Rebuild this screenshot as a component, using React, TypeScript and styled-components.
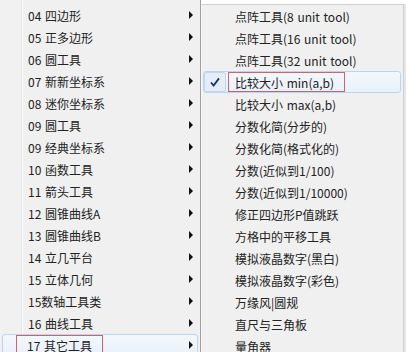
import React from "react";
import styled, { createGlobalStyle } from "styled-components";

interface IMenuEntry {
  label: string;
  hover?: boolean;
  marked?: boolean;
  checked?: boolean;
}

const toolGroups: IMenuEntry[] = [
  { label: "04 四边形" },
  { label: "05 正多边形" },
  { label: "06 圆工具" },
  { label: "07 新新坐标系" },
  { label: "08 迷你坐标系" },
  { label: "09 圆工具" },
  { label: "09 经典坐标系" },
  { label: "10 函数工具" },
  { label: "11 箭头工具" },
  { label: "12 圆锥曲线A" },
  { label: "13 圆锥曲线B" },
  { label: "14 立几平台" },
  { label: "15 立体几何" },
  { label: "15数轴工具类" },
  { label: "16 曲线工具" },
  { label: "17 其它工具", hover: true, marked: true },
];

const otherTools: IMenuEntry[] = [
  { label: "点阵工具(8 unit tool)" },
  { label: "点阵工具(16 unit tool)" },
  { label: "点阵工具(32 unit tool)" },
  { label: "比较大小 min(a,b)", hover: true, marked: true, checked: true },
  { label: "比较大小 max(a,b)" },
  { label: "分数化简(分步的)" },
  { label: "分数化简(格式化的)" },
  { label: "分数(近似到1/100)" },
  { label: "分数(近似到1/10000)" },
  { label: "修正四边形P值跳跃" },
  { label: "方格中的平移工具" },
  { label: "模拟液晶数字(黑白)" },
  { label: "模拟液晶数字(彩色)" },
  { label: "万缘风|圆规" },
  { label: "直尺与三角板" },
  { label: "量角器" },
];

const App: React.FC = () => {
  return (
    <>
      <GlobalStyle />
      <Screen>
        <ParentMenu>
          {toolGroups.map((v) => (
            <Item key={v.label} $hover={v.hover} $indent={24}>
              <Label $marked={v.marked} $pad={10}>
                {v.label}
              </Label>
              <Arrow />
            </Item>
          ))}
        </ParentMenu>
        <SubMenu>
          {otherTools.map((v) => (
            <Item key={v.label} $hover={v.hover} $indent={v.checked ? 0 : 30}>
              {v.checked && (
                <CheckBox>
                  <svg width="12" height="12" viewBox="0 0 12 12">
                    <path
                      d="M2 6.5 L4.6 9.6 L10 2.4"
                      fill="none"
                      stroke="#1b2f7a"
                      strokeWidth="1.8"
                    />
                  </svg>
                </CheckBox>
              )}
              <Label $marked={v.marked} $pad={6}>
                {v.label}
              </Label>
            </Item>
          ))}
        </SubMenu>
      </Screen>
    </>
  );
};

export default App;

const GlobalStyle = createGlobalStyle`
  body {
    margin: 0;
    background: #ffffff;
    font-family: "Noto Sans CJK SC", "Liberation Sans", sans-serif;
  }
`;

const Screen = styled.div`
  display: flex;
  align-items: flex-start;
  width: 417px;
  height: 352px;
  overflow: hidden;
`;

const BaseMenu = styled.div`
  display: flex;
  flex-direction: column;
  flex-shrink: 0;
  padding: 4px 2px 0;
  box-sizing: border-box;
`;

const ParentMenu = styled(BaseMenu)`
  width: 201px;
  height: 360px;
  border-right: 1px solid #a0a0a0;
  background: linear-gradient(
    to right,
    #f1f1f1 21px,
    #e2e3e3 21px,
    #e2e3e3 22px,
    #ffffff 22px,
    #ffffff 23px,
    #f0f0f0 23px
  );
`;

const SubMenu = styled(BaseMenu)`
  width: 203px;
  height: 360px;
  margin-top: 4px;
  padding-top: 0;
  padding-left: 1px;
  border: 1px solid #cfcfcf;
  border-left: 1px solid #f7f7f7;
  border-bottom: none;
  background: #f0f0f0;
  box-shadow: 2px 0 0 #e6e6e6;
`;

const Item = styled.div<{ $hover?: boolean; $indent: number }>`
  display: flex;
  align-items: center;
  height: 22px;
  flex-shrink: 0;
  box-sizing: border-box;
  padding-left: ${(p) => p.$indent}px;
  padding-right: 4px;
  font-size: 12px;
  word-spacing: 1px;
  color: #222222;
  border: 1px solid ${(p) => (p.$hover ? "#b7d6f2" : "transparent")};
  border-radius: 3px;
  background: ${(p) =>
    p.$hover ? "linear-gradient(#f4f8fc, #e8f0f9)" : "transparent"};
`;

const Label = styled.span<{ $marked?: boolean; $pad: number }>`
  display: inline-flex;
  align-items: center;
  height: 18px;
  flex: 1;
  flex-grow: ${(p) => (p.$marked ? 0 : 1)};
  padding: 0 10px 0 ${(p) => (p.$marked ? p.$pad : 0)}px;
  margin-left: ${(p) => (p.$marked ? -p.$pad - 1 : 0)}px;
  border: 1px solid ${(p) => (p.$marked ? "#d2616e" : "transparent")};
  white-space: nowrap;
  & + span {
    margin-left: auto;
  }
`;

const Arrow = styled.span`
  width: 0;
  height: 0;
  border-top: 4px solid transparent;
  border-bottom: 4px solid transparent;
  border-left: 4px solid #111111;
`;

const CheckBox = styled.span`
  display: flex;
  align-items: center;
  justify-content: center;
  width: 22px;
  height: 20px;
  margin-right: 9px;
  box-sizing: border-box;
  border: 1px solid #c3d6ec;
  border-radius: 2px;
  background: #e4edf8;
`;
